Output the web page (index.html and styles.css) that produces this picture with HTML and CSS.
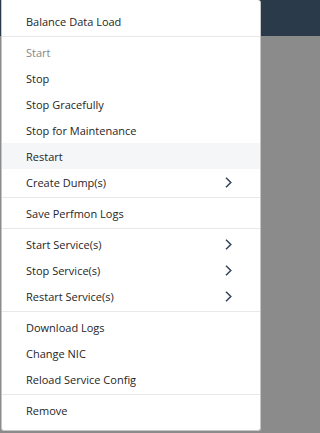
FILE: index.html
```html
<!DOCTYPE html>
<html lang="en">
<head>
<meta charset="utf-8">
<title>Context menu</title>
<link rel="stylesheet" href="styles.css">
</head>
<body>
<div class="menu" role="menu">
  <div class="item">Balance Data Load</div>
  <div class="sep"></div>
  <div class="item disabled">Start</div>
  <div class="item">Stop</div>
  <div class="item">Stop Gracefully</div>
  <div class="item">Stop for Maintenance</div>
  <div class="item hover">Restart</div>
  <div class="item sub">Create Dump(s)<svg class="chev" viewBox="0 0 7 11" width="7" height="11"><path d="M1 0.8 L5.8 5.5 L1 10.2" fill="none" stroke="#34445a" stroke-width="1.5"/></svg></div>
  <div class="sep"></div>
  <div class="item">Save Perfmon Logs</div>
  <div class="sep"></div>
  <div class="item sub">Start Service(s)<svg class="chev" viewBox="0 0 7 11" width="7" height="11"><path d="M1 0.8 L5.8 5.5 L1 10.2" fill="none" stroke="#34445a" stroke-width="1.5"/></svg></div>
  <div class="item sub">Stop Service(s)<svg class="chev" viewBox="0 0 7 11" width="7" height="11"><path d="M1 0.8 L5.8 5.5 L1 10.2" fill="none" stroke="#34445a" stroke-width="1.5"/></svg></div>
  <div class="item sub">Restart Service(s)<svg class="chev" viewBox="0 0 7 11" width="7" height="11"><path d="M1 0.8 L5.8 5.5 L1 10.2" fill="none" stroke="#34445a" stroke-width="1.5"/></svg></div>
  <div class="sep"></div>
  <div class="item">Download Logs</div>
  <div class="item">Change NIC</div>
  <div class="item">Reload Service Config</div>
  <div class="sep"></div>
  <div class="item">Remove</div>
</div>
</body>
</html>
```
FILE: styles.css
```css
html, body {
  margin: 0;
  padding: 0;
}
body {
  width: 263px;
  height: 433px;
  overflow: hidden;
  background: linear-gradient(to bottom, #2a3a4b 0, #2a3a4b 36px, #8b8b8b 36px, #8b8b8b 100%);
  font-family: "Open Sans", "Noto Sans", "Liberation Sans", sans-serif;
}
.menu {
  margin-left: 1px;
  width: 258px;
  background: #ffffff;
  border: 1px solid #c6c6c6;
  border-top: none;
  border-radius: 0 3px 3px 3px;
  padding: 8px 0 7px 0;
  box-sizing: content-box;
}
.item {
  height: 26px;
  display: flex;
  align-items: center;
  justify-content: space-between;
  padding: 0 28px 0 24px;
  font-size: 11px;
  color: #262626;
  white-space: nowrap;
}
.item.disabled {
  color: #86888a;
}
.item.hover {
  background: #f5f6f8;
}
.chev {
  display: block;
  flex: none;
}
.sep {
  height: 1px;
  background: #e8e8e8;
  margin: 2px 0;
}
```
